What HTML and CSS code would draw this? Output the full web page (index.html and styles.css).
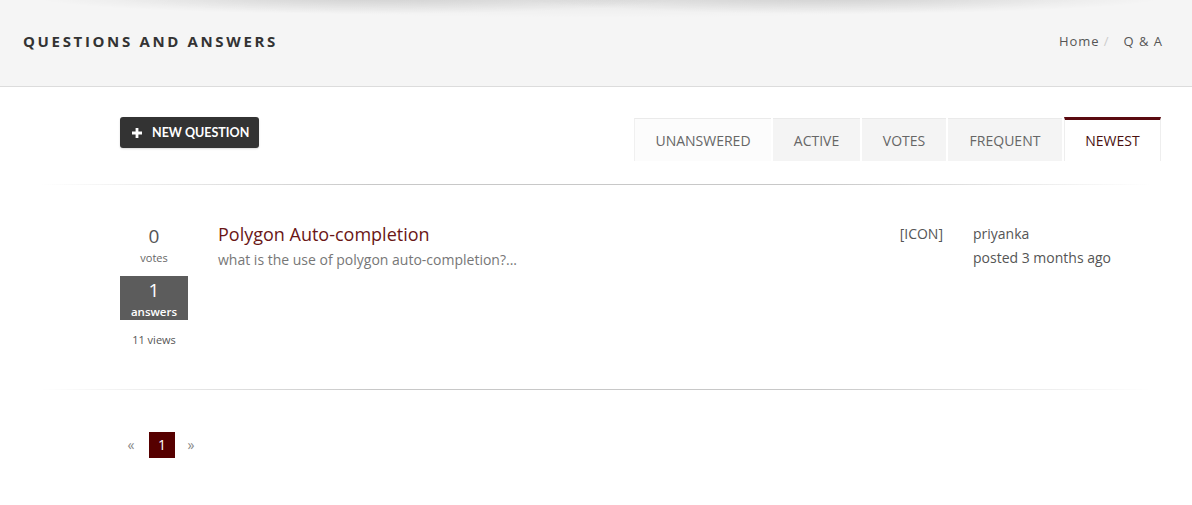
FILE: index.html
```html
<!DOCTYPE html>
<html>
<head>
<meta charset="utf-8">
<link rel="stylesheet" href="styles.css">
</head>
<body>
<header class="page-header">
  <h1 class="page-title">Questions and Answers</h1>
  <nav class="breadcrumb">
    <a href="#" class="crumb">Home</a><span class="crumb-sep">/</span><span class="crumb current">Q &amp; A</span>
  </nav>
</header>

<main class="content">
  <div class="toolbar">
    <a href="#" class="btn-new">
      <svg class="plus" width="10" height="10" viewBox="0 0 10 10"><path d="M3.6 0h2.8v3.6H10v2.8H6.4V10H3.6V6.4H0V3.6h3.6z" fill="#fff"/></svg>
      <span>New Question</span>
    </a>
    <ul class="tabs">
      <li class="tab tab-first">Unanswered</li>
      <li class="tab">Active</li>
      <li class="tab">Votes</li>
      <li class="tab">Frequent</li>
      <li class="tab tab-active">Newest</li>
    </ul>
  </div>

  <div class="divider"></div>

  <div class="question">
    <div class="stats">
      <div class="votes">
        <div class="num">0</div>
        <div class="label">votes</div>
      </div>
      <div class="answers">
        <div class="num">1</div>
        <div class="label">answers</div>
      </div>
      <div class="views">11 views</div>
    </div>
    <div class="summary">
      <a href="#" class="q-title">Polygon Auto-completion</a>
      <p class="excerpt">what is the use of polygon auto-completion?...</p>
    </div>
    <div class="icon-ph">[ICON]</div>
    <div class="author">
      <div class="name">priyanka</div>
      <div class="time">posted 3 months ago</div>
    </div>
  </div>

  <div class="divider"></div>

  <ul class="pager">
    <li class="pg-arrow pg-prev">&laquo;</li>
    <li class="pg-num">1</li>
    <li class="pg-arrow pg-next">&raquo;</li>
  </ul>
</main>
</body>
</html>
```

FILE: styles.css
```css
* { box-sizing: border-box; }
html, body { margin: 0; padding: 0; }
body {
  font-family: "Open Sans", "Liberation Sans", sans-serif;
  background: #fff;
  color: #555;
  width: 1192px;
}
a { text-decoration: none; }
ul { list-style: none; margin: 0; padding: 0; }

.page-header {
  position: relative;
  height: 87px;
  background: #f5f5f5;
  border-bottom: 1px solid #dcdcdc;
  display: flex;
  align-items: center;
  justify-content: space-between;
  padding: 0 29px 4px 23px;
  overflow: hidden;
}
.page-header::before {
  content: "";
  position: absolute;
  left: 0; right: 0; top: 0; height: 30px;
  background:
    radial-gradient(ellipse 330px 18px at 360px -4px, rgba(0,0,0,0.13), rgba(0,0,0,0) 100%),
    radial-gradient(ellipse 330px 18px at 840px -4px, rgba(0,0,0,0.13), rgba(0,0,0,0) 100%),
    radial-gradient(ellipse 520px 26px at 600px -8px, rgba(0,0,0,0.07), rgba(0,0,0,0) 100%);
  pointer-events: none;
}
.page-title {
  margin: 0;
  font-size: 15px;
  font-weight: 700;
  letter-spacing: 2.65px;
  text-transform: uppercase;
  color: #333;
}
.breadcrumb {
  font-size: 13px;
  letter-spacing: 1px;
  color: #555;
  display: flex;
  align-items: center;
}
.crumb { color: #555; }
.crumb-sep { color: #ccc; margin: 0 14px 0 4px; }

.content {
  padding: 0 31px 0 0;
}
.toolbar {
  display: flex;
  justify-content: space-between;
  align-items: flex-start;
  padding: 30px 0 0 120px;
  height: 97px;
}
.btn-new {
  display: inline-flex;
  align-items: center;
  gap: 10px;
  height: 31px;
  padding: 0 10px 0 12px;
  background: #333;
  border-radius: 3px;
  color: #fff;
  font-family: "Lato", "Open Sans", sans-serif;
  font-weight: 700;
  font-size: 12.5px;
  text-transform: uppercase;
  box-shadow: 0 1px 2px rgba(0,0,0,0.15);
}
.plus { display: block; }

.tabs {
  display: flex;
  gap: 2px;
  margin-top: 1px;
}
.tab {
  height: 43px;
  display: flex;
  align-items: center;
  justify-content: center;
  padding: 0;
  font-size: 14px;
  text-transform: uppercase;
  color: #666;
  background: #f4f4f4;
  border-top: 1px solid #eaeaea;
}
.tab:nth-child(1) { width: 137px; background: #fcfcfc; border-left: 1px solid #f0f0f0; }
.tab:nth-child(2) { width: 87px; }
.tab:nth-child(3) { width: 84px; }
.tab:nth-child(4) { width: 114px; }
.tab-active {
  width: 97px;
  background: #fff;
  color: #4a1010;
  border-top: 3px solid #5a0a10;
  border-right: 1px solid #eee;
  border-left: 1px solid #eee;
  margin-top: -1px;
  height: 44px;
}

.divider {
  height: 1px;
  margin: 0 10px 0 40px;
  background: linear-gradient(to right, rgba(200,200,200,0), #c8c8c8 30%, #c8c8c8 70%, rgba(200,200,200,0));
}

.question {
  display: flex;
  align-items: flex-start;
  padding: 39px 0 0 120px;
  height: 204px;
}
.stats {
  width: 68px;
  text-align: center;
  flex: none;
}
.votes .num {
  font-size: 19px;
  line-height: 24px;
  color: #555;
}
.votes .label {
  font-size: 11px;
  line-height: 16px;
  color: #666;
  padding-top: 2px;
}
.answers {
  margin-top: 10px;
  background: #5c5c5c;
  color: #fff;
  height: 44px;
  padding-top: 2px;
}
.answers .num { font-size: 19px; line-height: 24px; }
.answers .label { font-size: 11.5px; line-height: 16px; font-weight: 600; padding-top: 2px; }
.views {
  margin-top: 12px;
  font-size: 11px;
  color: #555;
}
.summary {
  margin-left: 30px;
  margin-top: -2px;
  flex: 1;
}
.q-title {
  display: block;
  font-size: 18px;
  line-height: 24px;
  color: #6a1616;
}
.excerpt {
  margin: 4px 0 0;
  font-size: 14px;
  line-height: 20px;
  color: #777;
}
.icon-ph {
  font-size: 14px;
  color: #555;
  margin-right: 30px;
  line-height: 20px;
  padding-top: 0;
}
.author {
  width: 188px;
  font-size: 14px;
  line-height: 24px;
  color: #555;
  margin-top: -2px;
}

.pager {
  display: flex;
  align-items: center;
  padding: 42px 0 0 120px;
}
.pg-arrow {
  font-size: 14px;
  color: #888;
  text-align: center;
  line-height: 26px;
}
.pg-prev { width: 22px; margin-right: 7px; }
.pg-next { width: 12px; margin-left: 10px; }
.pg-num {
  width: 26px;
  height: 26px;
  background: #560000;
  color: #fff;
  font-size: 14px;
  line-height: 26px;
  text-align: center;
}
```
